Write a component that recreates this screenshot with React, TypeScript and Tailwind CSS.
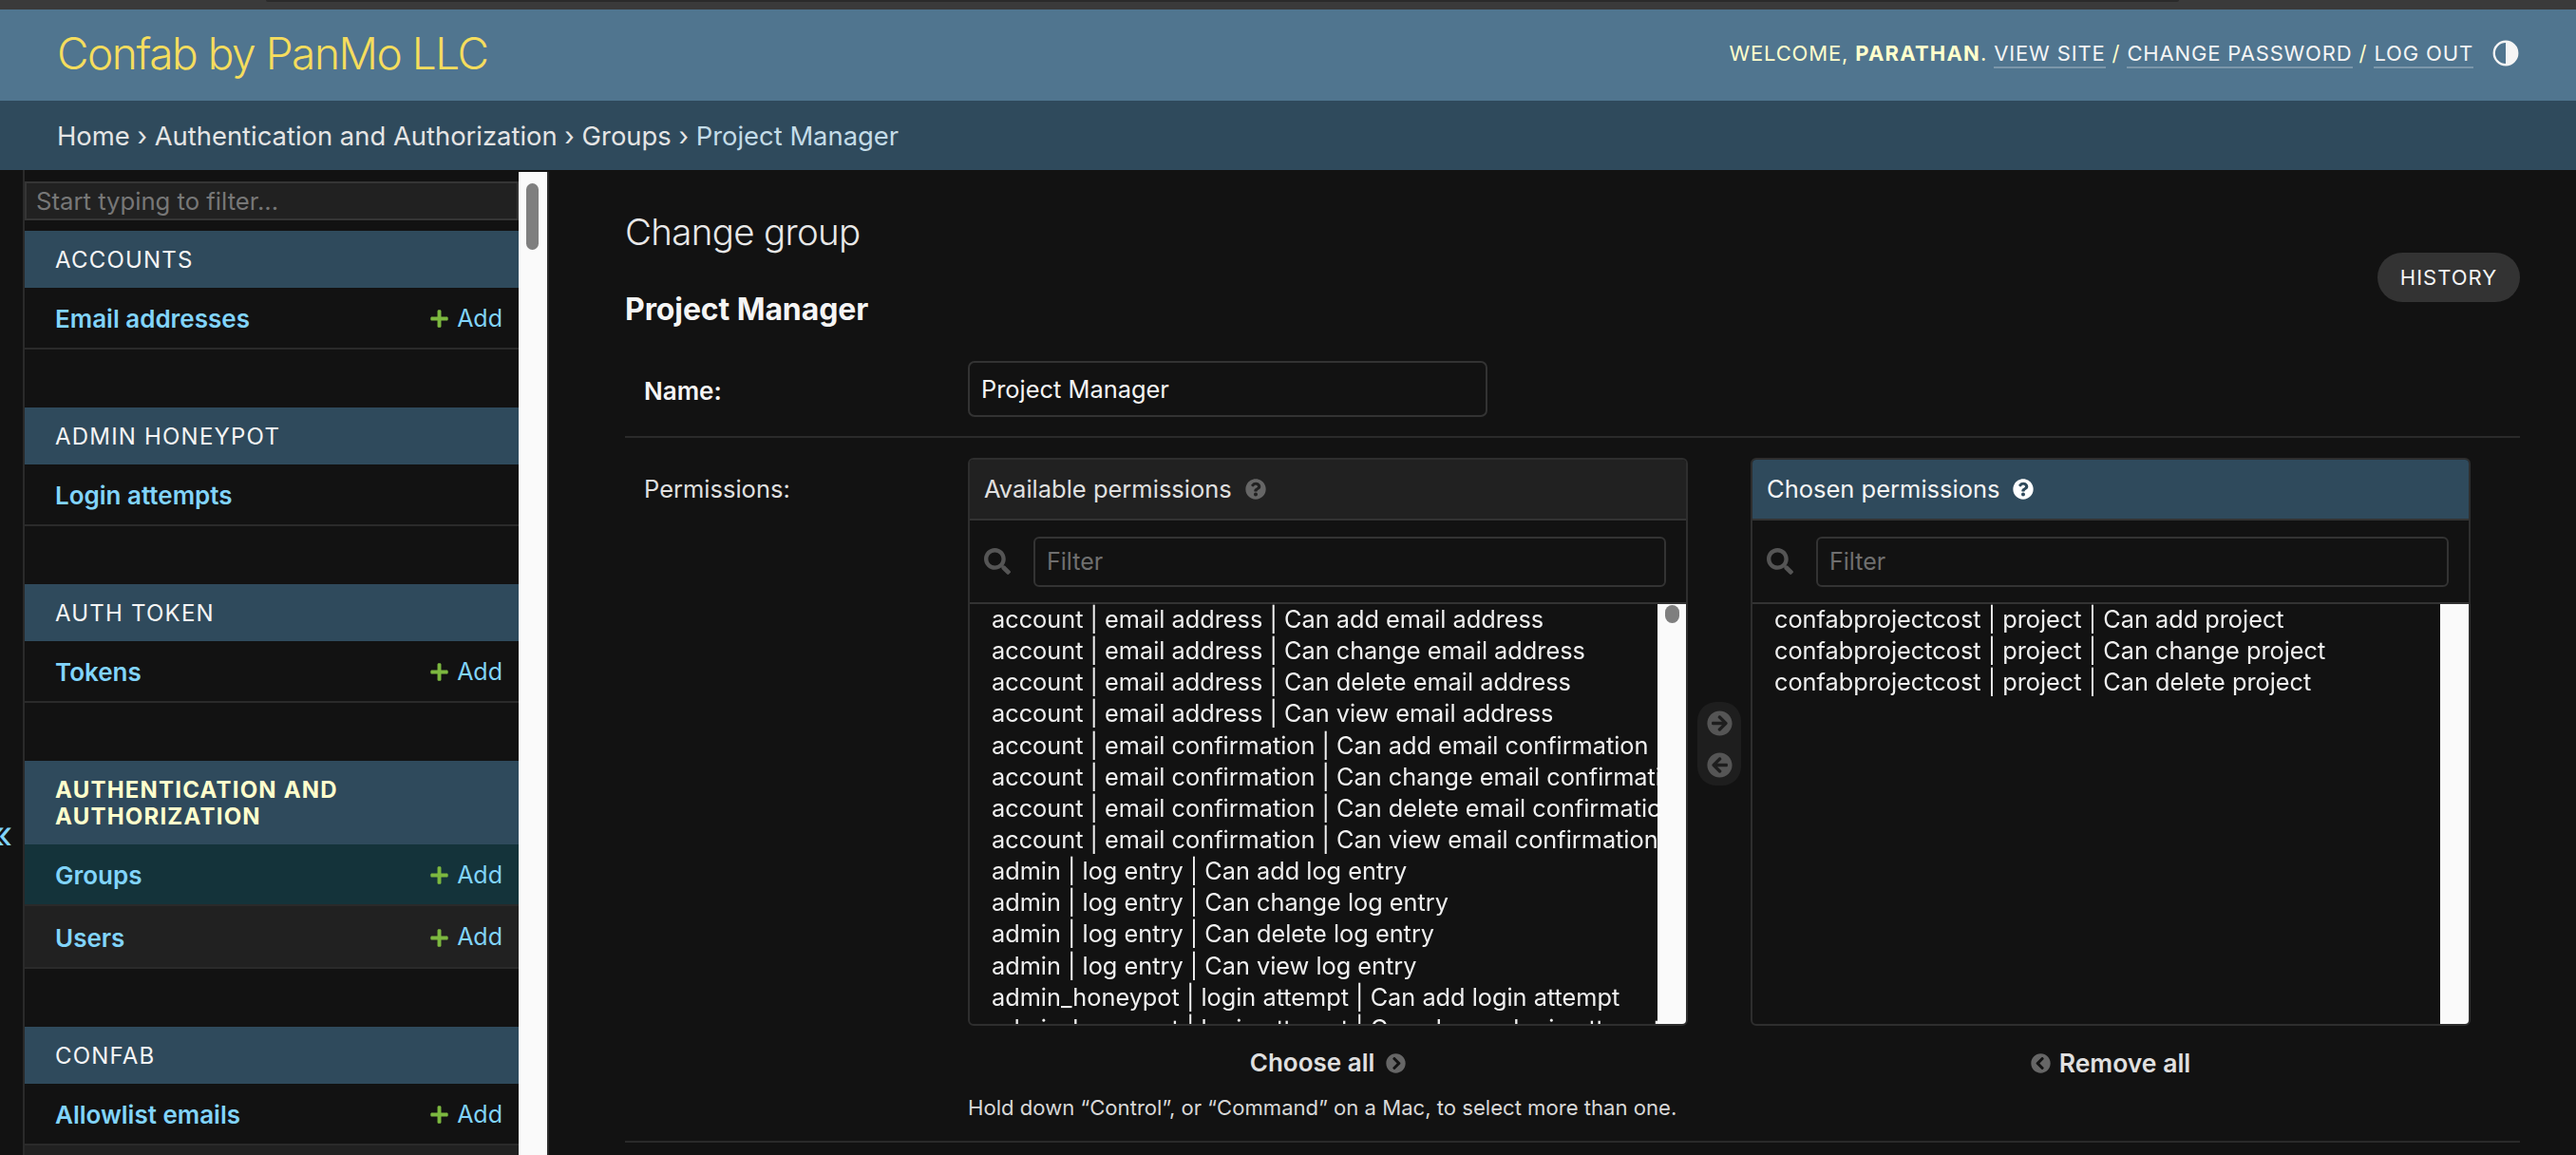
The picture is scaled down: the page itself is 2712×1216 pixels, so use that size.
import { FaArrowCircleLeft, FaArrowCircleRight, FaChevronCircleLeft, FaChevronCircleRight, FaPlus, FaQuestionCircle, FaSearch } from "react-icons/fa";

const available = [
  "account | email address | Can add email address",
  "account | email address | Can change email address",
  "account | email address | Can delete email address",
  "account | email address | Can view email address",
  "account | email confirmation | Can add email confirmation",
  "account | email confirmation | Can change email confirmation",
  "account | email confirmation | Can delete email confirmation",
  "account | email confirmation | Can view email confirmation",
  "admin | log entry | Can add log entry",
  "admin | log entry | Can change log entry",
  "admin | log entry | Can delete log entry",
  "admin | log entry | Can view log entry",
  "admin_honeypot | login attempt | Can add login attempt",
  "admin_honeypot | login attempt | Can change login attempt",
];

const chosen = [
  "confabprojectcost | project | Can add project",
  "confabprojectcost | project | Can change project",
  "confabprojectcost | project | Can delete project",
];

function NavRow({ label, add, bg, tall }: { label: string; add?: boolean; bg?: string; tall?: boolean }) {
  return (
    <div className={`flex items-center justify-between ${tall ? "h-[66px]" : "h-[65px]"} pl-[32px] pr-[17px] pt-[2px] border-b-2 border-[#2a2a2a] ${bg ?? ""}`}>
      <span className="text-[26px] font-semibold text-[#81d4fa]">{label}</span>
      {add && (
        <span className="flex items-center gap-[8px] text-[25px] text-[#81d4fa]">
          <FaPlus className="w-[21px] h-[21px] text-[#7cb83f]" />
          Add
        </span>
      )}
    </div>
  );
}

function Module({ title, current, children }: { title: string; current?: boolean; children: React.ReactNode }) {
  return (
    <div className="mb-[61px]">
      <div
        className={`flex items-center bg-[#2f4a5c] pl-[32px] pr-[18px] pt-[2px] uppercase ${
          current
            ? "h-[88px] text-[24px] leading-[28px] font-bold tracking-[1.2px] text-[#ffffcc]"
            : "h-[60px] text-[24px] tracking-[1.2px] text-[#f5f5f5]"
        }`}
      >
        {title}
      </div>
      {children}
    </div>
  );
}

function Selector({ title, items, active }: { title: string; items: string[]; active?: boolean }) {
  return (
    <div className="w-[758px] h-[598px] rounded-[6px] border-2 border-[#2e2e2e] flex flex-col overflow-hidden">
      <div className={`flex items-center h-[64px] shrink-0 gap-[14px] pl-[15px] border-b-2 border-[#333] text-[25.5px] ${active ? "bg-[#2f4a5c] text-[#f5f5f5]" : "bg-[#212121] text-[#e0e0e0]"}`}>
        {title}
        <FaQuestionCircle className={`w-[22px] h-[22px] ${active ? "text-white" : "text-[#666]"}`} />
      </div>
      <div className="flex items-center h-[88px] shrink-0 pl-[15px] pr-[21px] gap-[24px] border-b-2 border-[#333]">
        <FaSearch className="w-[28px] h-[28px] text-[#555]" />
        <div className="flex-1 flex items-center h-[53px] rounded-[6px] border-2 border-[#333] pl-[12px] pt-[2px] text-[25px] text-[#6f6f6f]">
          Filter
        </div>
      </div>
      <div className="flex flex-1 min-h-0">
        <div className="flex-1 min-w-0 overflow-hidden pl-[23px] text-[25.3px] text-[#f0f0f0] [will-change:transform]">
          {items.map((item) => (
            <div key={item} className="h-[33.15px] leading-[32px] whitespace-nowrap">
              {item}
            </div>
          ))}
        </div>
        <div className="w-[30px] shrink-0 bg-[#fafafa] pt-[1px] flex justify-center">
          {!active && <div className="w-[15px] h-[19px] rounded-full bg-[#7f7f7f]" />}
        </div>
      </div>
    </div>
  );
}

export default function App() {
  return (
    <div className="w-[2712px] h-[1216px] overflow-hidden bg-[#121212] text-[#f5f5f5] relative font-['Inter',sans-serif]">
      <div className="h-[10px] bg-[#3a3a3a]">
        <div className="ml-[280px] w-[2014px] h-[2px] rounded-b bg-[#2a2a2a]" />
      </div>

      <header className="flex items-center justify-between h-[96px] bg-[#50758f] pl-[60px] pr-[60px]">
        <div className="text-[46px] font-light tracking-[-1.45px] text-[#f5dd5d] -mt-[4px]">Confab by PanMo LLC</div>
        <div className="flex items-center text-[22px] tracking-[0.85px] text-[#ffffcc] uppercase -mt-[4px]">
          <span>
            Welcome, <strong className="font-bold tracking-[1.2px]">Parathan</strong>.{" "}
            <a className="text-[#f5f5f5] border-b-2 border-[#7c97aa] pb-[1px]">View site</a> /{" "}
            <a className="text-[#f5f5f5] border-b-2 border-[#7c97aa] pb-[1px]">Change password</a> /{" "}
            <a className="text-[#f5f5f5] border-b-2 border-[#7c97aa] pb-[1px]">Log out</a>
          </span>
          <svg viewBox="0 0 24 24" className="w-[28px] h-[28px] ml-[20px]">
            <circle cx="12" cy="12" r="10.5" fill="none" stroke="#f5f5f5" strokeWidth="2" />
            <path d="M12 1.5a10.5 10.5 0 0 1 0 21z" fill="#f5f5f5" />
          </svg>
        </div>
      </header>

      <nav className="flex items-center h-[73px] bg-[#2f4a5c] pl-[60px] pt-[2px] text-[27.4px] text-[#e5e5e5]">
        Home › Authentication and Authorization › Groups ›&nbsp;<span className="text-[#c4dce8]">Project Manager</span>
      </nav>

      <div className="flex h-[1037px]">
        <div className="w-[26px] shrink-0 border-r-2 border-[#2a2a2a] relative">
          <span className="absolute left-[-10px] top-[680px] text-[40px] leading-[40px] text-[#81d4fa]">«</span>
        </div>

        <aside className="w-[520px] shrink-0 overflow-hidden">
          <div className="mt-[12px] mb-[11px] flex items-center h-[41px] bg-[#212121] border-2 border-[#353535] pl-[10px] pt-[2px] text-[25.7px] text-[#777]">
            Start typing to filter...
          </div>
          <Module title="Accounts">
            <NavRow label="Email addresses" add />
          </Module>
          <Module title="Admin Honeypot">
            <NavRow label="Login attempts" />
          </Module>
          <Module title="Auth Token">
            <NavRow label="Tokens" add />
          </Module>
          <Module title="Authentication and Authorization" current>
            <NavRow label="Groups" add bg="bg-[#14333a]" />
            <NavRow label="Users" add bg="bg-[#212121]" tall />
          </Module>
          <Module title="Confab">
            <NavRow label="Allowlist emails" add />
            <NavRow label="Projects" add bg="bg-[#212121]" />
          </Module>
        </aside>

        <div className="w-[32px] shrink-0 bg-[#fafafa] border-r-2 border-[#2a2a2a] mt-[2px] pt-[12px] flex justify-center">
          <div className="w-[13px] h-[70px] rounded-full bg-[#7f7f7f] -ml-[2px]" />
        </div>

        <main className="flex-1 pl-[80px] pr-[59px] min-w-0">
          <div className="flex justify-between h-[201px]">
            <div>
              <h1 className="mt-[39px] text-[38.5px] leading-[52px] font-light tracking-[-0.7px] text-[#e8e8e8]">Change group</h1>
              <h2 className="mt-[36px] text-[32px] leading-[40px] font-bold tracking-[-0.1px] text-[#f5f5f5]">Project Manager</h2>
            </div>
            <a className="mt-[87px] flex items-center justify-center w-[150px] h-[52px] rounded-full bg-[#333] text-[22px] tracking-[1px] text-[#f5f5f5]">
              HISTORY
            </a>
          </div>

          <div className="flex items-start h-[81px] border-b-2 border-[#2a2a2a]">
            <label className="w-[361px] pl-[20px] pt-[2px] shrink-0 text-[26px] leading-[59px] font-semibold">Name:</label>
            <div className="flex items-center w-[547px] h-[59px] rounded-[7px] border-2 border-[#333] pl-[12px] pt-[2px] text-[25.4px]">Project Manager</div>
          </div>

          <div className="flex items-start pt-[21px] h-[740px]">
            <label className="w-[361px] pl-[20px] pt-[8px] shrink-0 text-[25.5px] leading-[50px] text-[#e0e0e0]">Permissions:</label>
            <div>
              <div className="flex items-start">
                <Selector title="Available permissions" items={available} />
                <div className="mx-[10px] mt-[257px] w-[46px] h-[88px] rounded-[20px] bg-[#1e1e1e] flex flex-col items-center gap-[17px] pt-[9px]">
                  <FaArrowCircleRight className="w-[27px] h-[27px] text-[#555]" />
                  <FaArrowCircleLeft className="w-[27px] h-[27px] text-[#555]" />
                </div>
                <Selector title="Chosen permissions" items={chosen} active />
              </div>
              <div className="flex text-[26px] font-semibold text-[#e0e0e0] mt-[23px] leading-[32px]">
                <div className="w-[758px] flex items-center justify-center gap-[12px]">
                  Choose all <FaChevronCircleRight className="w-[21px] h-[21px] text-[#666]" />
                </div>
                <div className="w-[66px]" />
                <div className="w-[758px] flex items-center justify-center gap-[9px] text-[26.5px]">
                  <FaChevronCircleLeft className="w-[21px] h-[21px] text-[#666]" /> Remove all
                </div>
              </div>
              <p className="mt-[17px] text-[22.1px] leading-[28px] text-[#d8d8d8] whitespace-nowrap">
                Hold down “Control”, or “Command” on a Mac, to select more than one.
              </p>
            </div>
          </div>
        </main>
      </div>

      <div className="absolute left-[658px] top-[1201px] w-[1995px] h-[2px] bg-[#2a2a2a]" />
    </div>
  );
}
